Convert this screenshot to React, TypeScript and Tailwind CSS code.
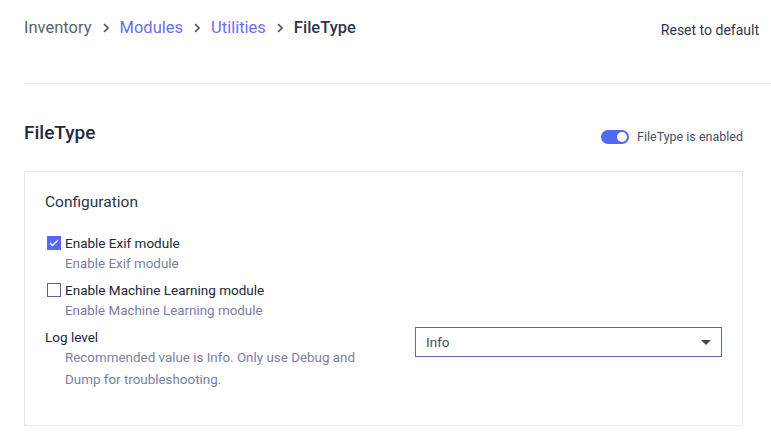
export default function App() {
  return (
    <div
      className="min-h-[442px] bg-white pl-6 text-[#2b2f3f]"
      style={{ fontFamily: "Roboto, 'Open Sans', sans-serif" }}
    >
      {/* top bar */}
      <div className="flex h-[84px] items-start justify-between border-b border-[#e6e8f0] pr-3 pt-[17px]">
        <nav className="flex items-center text-[16.5px] leading-[22px]">
          <span className="text-[#5c6070]">Inventory</span>
          <Chevron />
          <span className="text-[#6c6cf2]">Modules</span>
          <Chevron />
          <span className="text-[#6c6cf2]">Utilities</span>
          <Chevron />
          <span className="font-medium text-[#30344a]">FileType</span>
        </nav>
        <button className="mt-[3px] text-[14px] leading-5 text-[#30374f]">
          Reset to default
        </button>
      </div>

      <div className="pr-7">
        {/* section title */}
        <div className="flex items-center justify-between pt-[35px]">
          <h1 className="text-[19px] font-medium leading-6 text-[#262a3a]">FileType</h1>
          <div className="mt-[8px] flex items-center gap-2">
            <div className="flex h-[14px] w-[28px] items-center justify-end rounded-full bg-[#4f69f0] pr-[2px]">
              <div className="h-[10px] w-[10px] rounded-full bg-white" />
            </div>
            <span className="text-[12.5px] leading-5 text-[#4a4f63]">FileType is enabled</span>
          </div>
        </div>

        {/* card */}
        <div className="mt-[24px] border border-[#e6e6e8] pb-[34px] pl-5 pr-5 pt-[20px]">
          <h2 className="text-[15.5px] leading-5 text-[#2f3346]">Configuration</h2>

          <div className="mt-[21px] flex flex-col">
            <Check checked label="Enable Exif module" desc="Enable Exif module" />
            <div className="mt-[6px]">
              <Check label="Enable Machine Learning module" desc="Enable Machine Learning module" />
            </div>

            <div className="mt-[6px] flex">
              <div className="w-[370px]">
                <div className="text-[13.5px] leading-5 text-[#23273a]">Log level</div>
                <p className="pl-5 text-[13.4px] leading-[22px] text-[#7a7ea5]">
                  Recommended value is Info. Only use Debug and
                  <br />
                  Dump for troubleshooting.
                </p>
              </div>
              <div className="flex-1">
                <div className="flex h-[30px] items-center justify-between border border-[#5b6ba3] pl-[10px] pr-[10px]">
                  <span className="text-[13.5px] text-[#4b5063]">Info</span>
                  <svg width="10" height="5" viewBox="0 0 10 5">
                    <path d="M0 0h10L5 5z" fill="#3f4560" />
                  </svg>
                </div>
              </div>
            </div>
          </div>
        </div>
      </div>
    </div>
  );
}

function Chevron() {
  return (
    <svg width="22" height="22" viewBox="0 0 22 22" className="mx-[3px]">
      <path d="M9 7l4 4-4 4" fill="none" stroke="#4a4f63" strokeWidth="1.6" />
    </svg>
  );
}

function Check({ checked, label, desc }: { checked?: boolean; label: string; desc: string }) {
  return (
    <div>
      <div className="flex items-center gap-[4px]">
        <div className="ml-[2px]">
          {checked ? (
            <div className="flex h-[14px] w-[14px] items-center justify-center bg-[#5469f0]">
              <svg width="10" height="8" viewBox="0 0 10 8">
                <path d="M1 4l2.5 2.5L9 1" fill="none" stroke="white" strokeWidth="1.4" />
              </svg>
            </div>
          ) : (
            <div className="h-[14px] w-[14px] border border-[#5b6594] bg-white" />
          )}
        </div>
        <span className="text-[13.5px] leading-5 text-[#23273a]">{label}</span>
      </div>
      <div className="mt-[1px] pl-5 text-[13.4px] leading-5 text-[#7a7ea5]">{desc}</div>
    </div>
  );
}
